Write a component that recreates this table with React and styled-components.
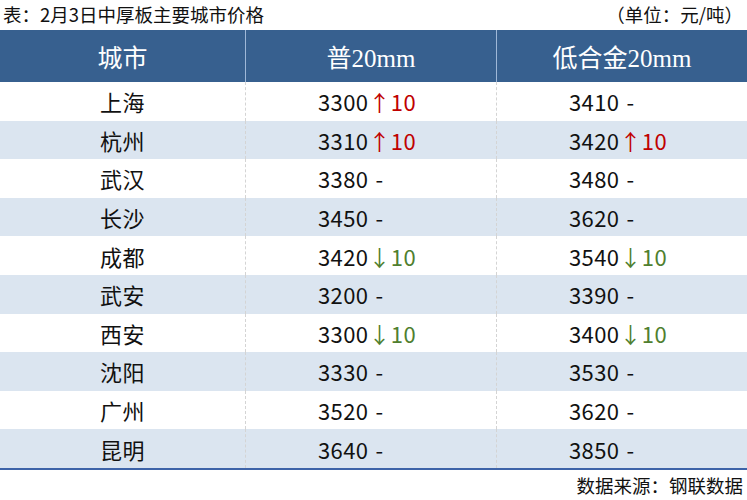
import React from "react";
import styled, { createGlobalStyle } from "styled-components";

const Global = createGlobalStyle`
  body { margin: 0; background: #fff; }
  * { box-sizing: border-box; }
`;

const Page = styled.div`
  width: 747px; height: 500px; background: #fff; overflow: hidden;
  font-family: "Noto Sans CJK SC", "Noto Sans", sans-serif; color: #111;
`;

const Caption = styled.div`
  display: flex; justify-content: space-between; align-items: center;
  height: 30px; padding: 0 4px 2px 3px; font-size: 18.5px; line-height: 1;
`;

const Table = styled.div`
  display: grid; grid-template-columns: 245px 251px 251px;
  border-bottom: 2px solid #3d63a8;
`;

const Head = styled.div`
  height: 52px; background: #37608f; color: #fff;
  display: flex; align-items: center; justify-content: center;
  font-family: "Liberation Serif", "Noto Sans CJK SC", serif; font-size: 25px;
  border-left: ${p => (p.$first ? "none" : "1px solid #9fb8d8")};
`;

const Cell = styled.div`
  height: 38.6px; display: flex; align-items: center;
  justify-content: ${p => (p.$city ? "center" : "flex-start")};
  padding-left: ${p => (p.$city ? "0" : "72px")};
  background: ${p => (p.$alt ? "#dbe5f0" : "#fff")};
  border-left: ${p => (p.$city ? "none" : "1px dashed #d4d4d4")};
  font-size: 22px; letter-spacing: 0.4px;
`;

const Change = styled.span`
  color: ${p => (p.$up ? "#c00000" : "#4f7f2f")};
`;

const Dash = styled.span`
  margin-left: 7px;
`;

const Footer = styled.div`
  text-align: right; padding: 4px 4px 0 0; font-size: 18.5px; line-height: 1.2;
`;

const rows = [
  ["上海", [3300, 10], [3410, 0]],
  ["杭州", [3310, 10], [3420, 10]],
  ["武汉", [3380, 0], [3480, 0]],
  ["长沙", [3450, 0], [3620, 0]],
  ["成都", [3420, -10], [3540, -10]],
  ["武安", [3200, 0], [3390, 0]],
  ["西安", [3300, -10], [3400, -10]],
  ["沈阳", [3330, 0], [3530, 0]],
  ["广州", [3520, 0], [3620, 0]],
  ["昆明", [3640, 0], [3850, 0]],
];

const Price = ({ value, diff, alt }) => (
  <Cell $alt={alt}>
    {value}
    {diff === 0 ? (
      <Dash>-</Dash>
    ) : (
      <Change $up={diff > 0}>
        {diff > 0 ? "↑" : "↓"}
        {Math.abs(diff)}
      </Change>
    )}
  </Cell>
);

export default function App() {
  return (
    <Page>
      <Global />
      <Caption>
        <span>表：2月3日中厚板主要城市价格</span>
        <span>（单位：元/吨）</span>
      </Caption>
      <Table>
        <Head $first>城市</Head>
        <Head>普20mm</Head>
        <Head>低合金20mm</Head>
        {rows.map(([city, a, b], i) => (
          <React.Fragment key={city}>
            <Cell $city $alt={i % 2 === 1}>{city}</Cell>
            <Price value={a[0]} diff={a[1]} alt={i % 2 === 1} />
            <Price value={b[0]} diff={b[1]} alt={i % 2 === 1} />
          </React.Fragment>
        ))}
      </Table>
      <Footer>数据来源：钢联数据</Footer>
    </Page>
  );
}
